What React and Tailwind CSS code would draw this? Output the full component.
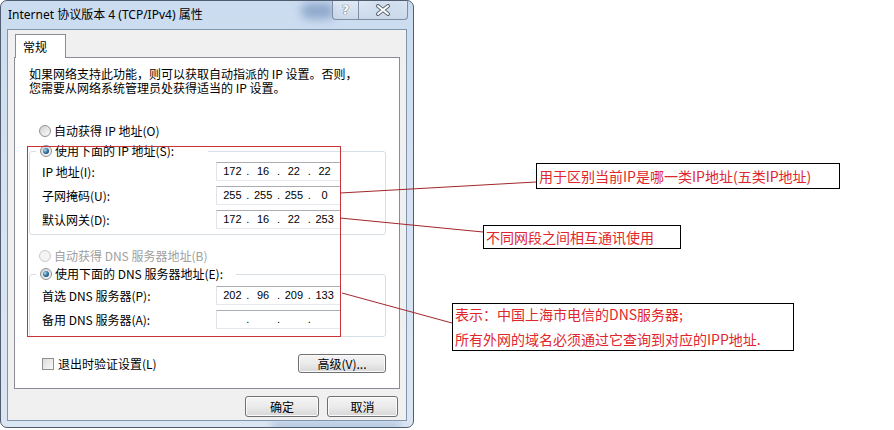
import { Fragment } from "react";

// Win7-style radio button
const Radio = ({ checked, disabled }) => (
  <span
    className={
      disabled
        ? "flex h-[12px] w-[12px] shrink-0 items-center justify-center rounded-full border border-[#c9c9c9] bg-[#f3f3f3]"
        : "flex h-[12px] w-[12px] shrink-0 items-center justify-center rounded-full border border-[#8e8f8f] bg-gradient-to-br from-[#d2d2d2] to-[#fbfbfb]"
    }
  >
    {checked && (
      <span className="h-[6px] w-[6px] rounded-full bg-[radial-gradient(circle_at_35%_35%,#a8dbf6,#2a6796_55%,#0e2f4f)]" />
    )}
  </span>
);

const IpField = ({ parts }) => (
  <div className="flex h-[19px] w-[125px] items-center border border-[#abadb3] border-x-[#e2e3ea] border-b-[#e3e9ef] bg-white px-[2px] font-['Liberation_Sans',sans-serif] text-[11px] text-black">
    {parts.map((p, i) => (
      <Fragment key={i}>
        {i > 0 && <span className="w-[4px] text-center">.</span>}
        <span className="flex-1 text-center">{p}</span>
      </Fragment>
    ))}
  </div>
);

const IpRow = ({ label, parts }) => (
  <div className="flex h-[19px] items-center">
    <span className="w-[174px]">{label}</span>
    <IpField parts={parts} />
  </div>
);

const WinButton = ({ children, className }) => (
  <div
    className={`flex items-center justify-center rounded-[3px] border border-[#707070] bg-gradient-to-b from-[#f4f4f4] via-[#ebebeb] to-[#d7d7d7] text-[12px] text-black shadow-[inset_0_0_0_1px_#fbfbfb] ${className}`}
  >
    {children}
  </div>
);

const Dialog = () => (
  <div className="relative flex h-[428px] w-[414px] shrink-0 flex-col overflow-hidden rounded-[7px] border border-[#4f5d6f] bg-gradient-to-b from-[#cbdcf0] via-[#d6e3f2] to-[#dbe6f3]">
    {/* glass blur behind the caption buttons */}
    <div className="absolute left-[300px] top-[2px] h-[16px] w-[34px] rounded-full bg-[#8fa8cc] blur-[5px]" />
    <div className="absolute left-[368px] top-[-4px] h-[12px] w-[36px] rounded-full bg-[#9fb6d6] blur-[5px]" />
    <div className="absolute bottom-[-2px] left-[270px] h-[6px] w-[130px] rounded-full bg-[#9fb6d6] blur-[4px]" />

    {/* caption */}
    <div className="relative flex h-[28px] items-start">
      <div className="flex h-full flex-1 items-center pl-[7px] font-['Noto_Sans','Noto_Sans_CJK_SC',sans-serif] text-[12px] text-black">
        Internet 协议版本 4 (TCP/IPv4) 属性
      </div>
      <div className="mr-[5px] mt-[-1px] flex h-[20px]">
        <div className="flex w-[27px] items-center justify-center rounded-bl-[4px] border border-t-0 border-[#7d8ea5] bg-gradient-to-b from-[#e9f0f8]/70 to-[#c9d7e8]/70 font-['DejaVu_Sans',sans-serif] text-[13px] font-bold text-white [text-shadow:0_0_1px_#4b5665,0_0_1px_#4b5665]">
          ?
        </div>
        <div className="flex w-[49px] items-center justify-center rounded-br-[4px] border border-l-0 border-t-0 border-[#7d8ea5] bg-gradient-to-b from-[#e9f0f8]/70 to-[#c9d7e8]/70">
          <svg width="16" height="12" viewBox="0 0 16 12">
            <path d="M3 2 L13 10 M13 2 L3 10" stroke="#5d6878" strokeWidth="4" strokeLinecap="round" />
            <path d="M3 2 L13 10 M13 2 L3 10" stroke="#ffffff" strokeWidth="2" strokeLinecap="round" />
          </svg>
        </div>
      </div>
    </div>

    {/* client area */}
    <div className="relative mx-[6px] mb-[6px] flex flex-1 flex-col border border-[#8094ad] bg-[#f0f0f0] px-[6px] pt-[4px] font-['Noto_Sans_CJK_SC',sans-serif] text-[12px] text-black">
      <div className="relative z-10 -mb-px ml-[1px] flex h-[24px] w-[51px] items-center border border-b-0 border-[#898c95] bg-white pl-[7px]">
        常规
      </div>

      <div className="flex h-[332px] flex-col border border-[#898c95] bg-white">
        <p className="mt-[9px] pl-[14px] leading-[14px]">
          如果网络支持此功能，则可以获取自动指派的 IP 设置。否则，
          <br />
          您需要从网络系统管理员处获得适当的 IP 设置。
        </p>

        <div className="ml-[24px] mt-[28px] flex h-[16px] items-center gap-[3px]">
          <Radio />
          <span>自动获得 IP 地址(O)</span>
        </div>

        <fieldset className="ml-[14px] mr-[13px] mt-[4px] flex flex-col gap-[5px] rounded-[3px] border border-[#d5dfe5] pb-[5px] pt-[3px]">
          <legend className="ml-[6px] flex h-[16px] w-[172px] items-center gap-[3px] pl-[4px]">
            <Radio checked />
            <span>使用下面的 IP 地址(S):</span>
          </legend>
          <div className="flex flex-col gap-[5px] pl-[12px]">
            <IpRow label="IP 地址(I):" parts={["172", "16", "22", "22"]} />
            <IpRow label="子网掩码(U):" parts={["255", "255", "255", "0"]} />
            <IpRow label="默认网关(D):" parts={["172", "16", "22", "253"]} />
          </div>
        </fieldset>

        <div className="ml-[24px] mt-[13px] flex h-[16px] items-center gap-[3px] text-[#a0a0a0]">
          <Radio disabled />
          <span>自动获得 DNS 服务器地址(B)</span>
        </div>

        <fieldset className="ml-[14px] mr-[13px] mt-[2px] flex flex-col rounded-[3px] border border-[#d5dfe5] pb-[7px] pt-[4px]">
          <legend className="ml-[6px] flex h-[16px] w-[200px] items-center gap-[3px] pl-[4px]">
            <Radio checked />
            <span>使用下面的 DNS 服务器地址(E):</span>
          </legend>
          <div className="flex flex-col gap-[5px] pl-[12px]">
            <IpRow label="首选 DNS 服务器(P):" parts={["202", "96", "209", "133"]} />
            <IpRow label="备用 DNS 服务器(A):" parts={["", "", "", ""]} />
          </div>
        </fieldset>

        <div className="mt-[17px] flex h-[19px] items-center justify-between pl-[27px] pr-[13px]">
          <div className="flex items-center gap-[4px]">
            <span className="h-[12px] w-[12px] border border-[#8f8f8f] bg-gradient-to-br from-[#dcdcdc] to-[#fafafa]" />
            <span>退出时验证设置(L)</span>
          </div>
          <WinButton className="h-[19px] w-[88px]">高级(V)...</WinButton>
        </div>
      </div>

      <div className="mr-[2px] mt-[7px] flex justify-end gap-[8px]">
        <WinButton className="h-[21px] w-[74px]">确定</WinButton>
        <WinButton className="h-[21px] w-[71px]">取消</WinButton>
      </div>
    </div>
  </div>
);

const notes = [
  { cls: "left-[536px] top-[163px] h-[26px] w-[304px] justify-center", lines: ["用于区别当前IP是哪一类IP地址(五类IP地址)"] },
  { cls: "left-[483px] top-[225px] h-[24px] w-[198px] justify-center", lines: ["不同网段之间相互通讯使用"] },
  {
    cls: "left-[452px] top-[303px] h-[48px] w-[342px] justify-between pb-[1px]",
    lines: ["表示：中国上海市电信的DNS服务器;", "所有外网的域名必须通过它查询到对应的IPP地址."],
  },
];

export default function App() {
  return (
    <div className="relative h-[430px] w-[894px] overflow-hidden bg-white">
      <div className="flex">
        <Dialog />
      </div>

      {/* highlight around the address settings */}
      <div className="pointer-events-none absolute left-[27px] top-[146px] h-[191px] w-[314px] border border-[#c8333a]" />

      {/* leader lines */}
      <svg className="pointer-events-none absolute left-0 top-0" width="894" height="430">
        <line x1="340" y1="193" x2="536" y2="182" stroke="#a3262c" strokeWidth="1" />
        <line x1="340" y1="218" x2="483" y2="232" stroke="#a3262c" strokeWidth="1" />
        <line x1="342" y1="293" x2="452" y2="323" stroke="#a3262c" strokeWidth="1" />
      </svg>

      {notes.map((n, i) => (
        <div
          key={i}
          className={`absolute flex flex-col border border-black bg-white px-[2px] font-['Noto_Sans_CJK_SC',sans-serif] text-[14px] leading-[20px] text-[#e0262d] ${n.cls}`}
        >
          {n.lines.map((l) => (
            <span key={l} className="whitespace-nowrap">{l}</span>
          ))}
        </div>
      ))}
    </div>
  );
}
